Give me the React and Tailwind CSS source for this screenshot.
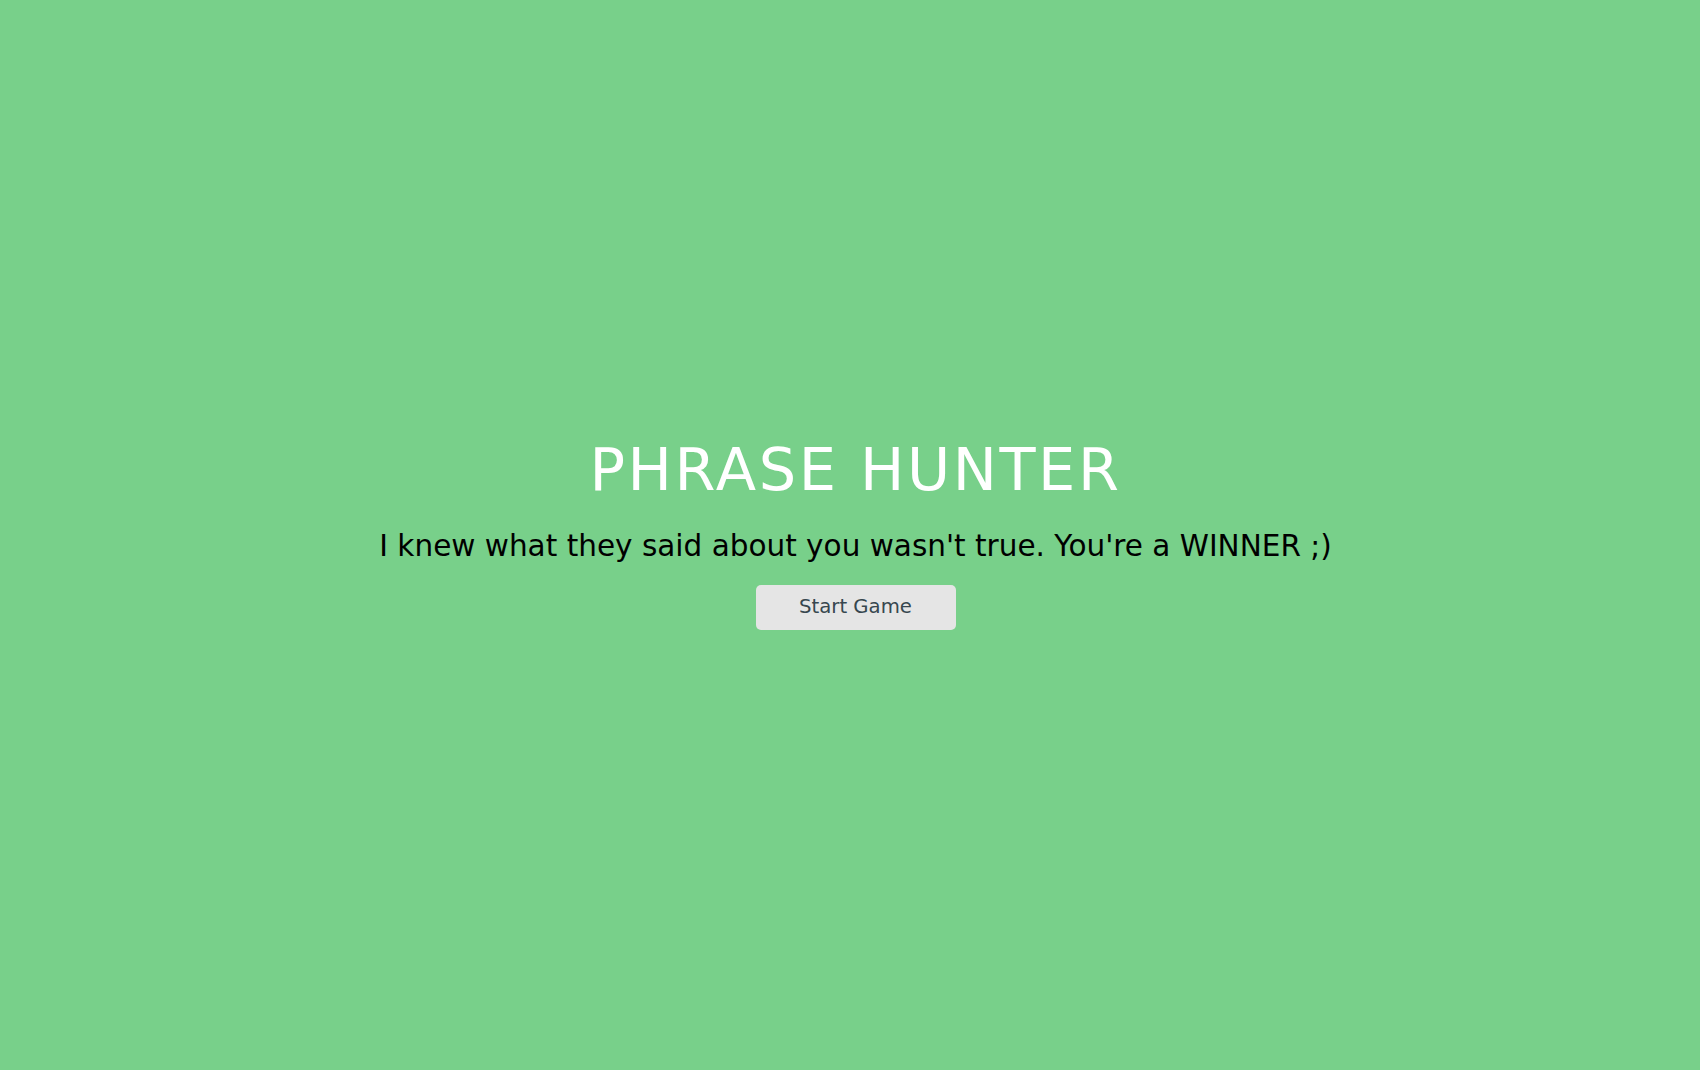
import React from 'react';

export default function App() {
  return (
    <div className="w-full h-[1070px] pl-[11px] bg-[#78d08a] flex flex-col items-center justify-center font-['DejaVu_Sans',sans-serif]">
      {/* Overlay title */}
      <h2 className="text-[59px] leading-none text-white font-normal tracking-[2.6px]">PHRASE HUNTER</h2>
      <h3 className="mt-[33px] text-[29.5px] leading-none text-black font-normal">
        I knew what they said about you wasn't true. You're a WINNER ;)
      </h3>
      <button className="mt-[23px] w-[200px] h-[45px] rounded-[5px] bg-[#e5e5e5] text-[#37474f] text-[19.7px]">
        Start Game
      </button>
    </div>
  );
}
